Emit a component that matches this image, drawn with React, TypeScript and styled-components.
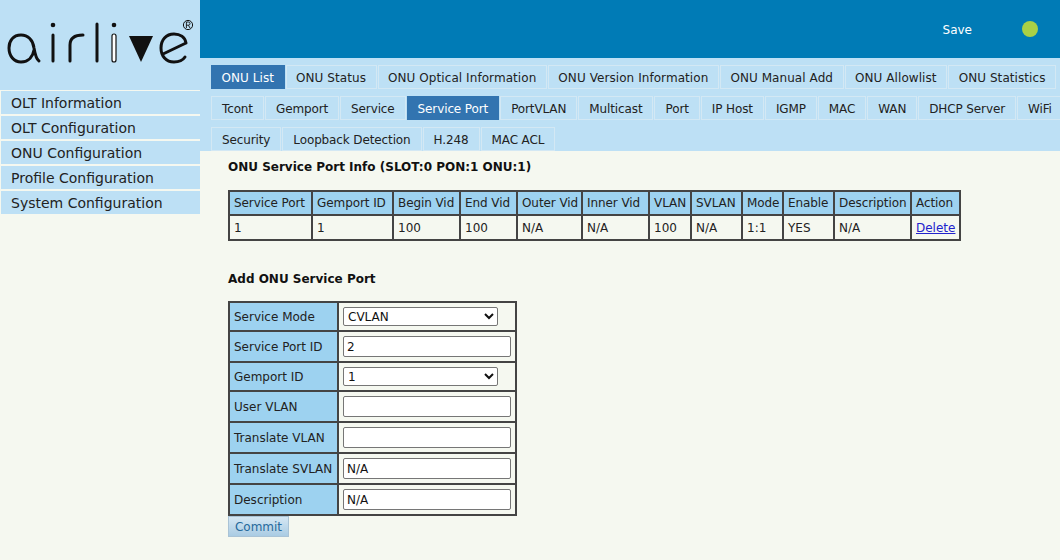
import React from "react";
import styled, { createGlobalStyle } from "styled-components";

const GlobalStyle = createGlobalStyle`
  html, body {
    margin: 0;
    padding: 0;
    height: 100%;
    overflow: hidden;
    background: #f5f8f0;
    font-family: "DejaVu Sans", Verdana, sans-serif;
    font-size: 12px;
    color: #222;
  }
`;

const Page = styled.div`
  display: grid;
  grid-template-columns: 200px 1fr;
  width: 1060px;
  height: 560px;
`;

const Sidebar = styled.aside`
  display: flex;
  flex-direction: column;
`;

const LogoArea = styled.div`
  height: 90px;
  background: #bde0f5;
`;

const MenuList = styled.nav`
  display: flex;
  flex-direction: column;
  background: #bde0f5;
`;

const MenuItem = styled.div`
  height: 23px;
  line-height: 25px;
  padding-left: 10px;
  border-top: 2px solid #f5f8f0;
  border-left: 1px solid #f5f8f0;
  font-size: 14px;
  color: #222;
  &:first-child {
    border-top-width: 1px;
  }
`;

const Main = styled.main`
  display: flex;
  flex-direction: column;
  min-width: 0;
`;

const TopBar = styled.header`
  height: 58px;
  background: #007bb6;
  display: flex;
  align-items: center;
  justify-content: flex-end;
  padding-right: 22px;
  gap: 50px;
`;

const SaveLabel = styled.span`
  color: #fff;
  font-size: 12px;
  margin-top: 2px;
`;

const StatusDot = styled.span`
  width: 16px;
  height: 16px;
  border-radius: 50%;
  background: #a9d046;
`;

const TabsArea = styled.div`
  height: 93px;
  box-sizing: border-box;
  background: #bde0f5;
  padding: 7px 0 0 11px;
  display: flex;
  flex-direction: column;
  gap: 7px;
  overflow: hidden;
`;

const TabRow = styled.div<{ $spacing: number; $pad: number }>`
  display: flex;
  gap: 1px;
  height: 24px;
  flex: none;
  letter-spacing: ${(p) => p.$spacing}px;
  --tab-pad: ${(p) => p.$pad}px;
`;

const Tab = styled.div<{ $active?: boolean }>`
  box-sizing: border-box;
  height: 24px;
  line-height: 24px;
  padding: 0 var(--tab-pad);
  white-space: nowrap;
  font-size: 12px;
  color: ${(p) => (p.$active ? "#fff" : "#222")};
  background: ${(p) => (p.$active ? "#3274b0" : "#bde0f5")};
  border: 1px solid ${(p) => (p.$active ? "#3274b0" : "#d3e8f4")};
`;

const Content = styled.section`
  flex: 1;
  background: #f5f8f0;
  padding: 8px 0 0 28px;
`;

const Heading = styled.h3<{ $gap: number }>`
  margin: 0 0 ${(p) => p.$gap}px;
  font-size: 12px;
  line-height: 16px;
  font-weight: bold;
  color: #111;
`;

const InfoTable = styled.table`
  border-collapse: collapse;
  table-layout: fixed;
  width: 733px;
  border: 2px solid #444;
  margin-bottom: 30px;
`;

const HeadCell = styled.th`
  background: #9dd2f0;
  border: 2px solid #444;
  height: 22px;
  padding: 0 0 0 4px;
  font-weight: normal;
  font-size: 12px;
  letter-spacing: -0.08px;
  text-align: left;
  white-space: nowrap;
  color: #222;
`;

const DataCell = styled.td`
  border: 2px solid #444;
  height: 23px;
  padding: 0 0 0 4px;
  font-size: 12px;
  white-space: nowrap;
  color: #222;
`;

const DeleteLink = styled.a`
  color: #2222cc;
  text-decoration: underline;
`;

const FormTable = styled.table`
  border-collapse: collapse;
  table-layout: fixed;
  width: 289px;
  border: 2px solid #444;
`;

const LabelCell = styled.td`
  width: 103px;
  background: #9dd2f0;
  border: 2px solid #444;
  padding: 0 0 0 4px;
  font-size: 12px;
  white-space: nowrap;
  color: #222;
`;

const FieldCell = styled.td<{ $height: number }>`
  height: ${(p) => p.$height}px;
  border: 2px solid #444;
  padding: 0 0 0 4px;
`;

const TextField = styled.input`
  display: block;
  box-sizing: border-box;
  width: 168px;
  height: 21px;
  padding: 0 3px;
  border: 1px solid #767676;
  border-radius: 2px;
  background: #fff;
  font: 12px "DejaVu Sans", Verdana, sans-serif;
  color: #111;
`;

const SelectField = styled.select`
  display: block;
  box-sizing: border-box;
  width: 155px;
  height: 19px;
  border: 1px solid #767676;
  border-radius: 2px;
  background: #fff;
  font: 12px "DejaVu Sans", Verdana, sans-serif;
  color: #111;
`;

const CommitButton = styled.button`
  display: block;
  box-sizing: border-box;
  width: 61px;
  height: 21px;
  padding: 0;
  border: 1px solid #a9c3d6;
  background: linear-gradient(#d5e7f3, #a9cbe3);
  font: 12px "DejaVu Sans", Verdana, sans-serif;
  color: #26699c;
`;

function Logo() {
  return (
    <svg width="200" height="90" viewBox="0 0 200 90">
      <g fill="none" stroke="#111" strokeWidth="3" strokeLinecap="round">
        <path d="M39 61c-3-2-4-7-5-13-1-8-6-13-13-13-8 0-12 6-12 13 0 8 5 14 12 14 8 0 12-6 13-12" />
        <path d="M53 35v26" />
        <path d="M70 61V45c0-6 4-10 13-10" />
        <path d="M97 24v37" />
        <path d="M186 43c-1-6-6-9-12-9-8 0-13 6-13 14s5 14 13 14c5 0 9-2 11-5M163 54l23-11" />
      </g>
      <circle cx="53" cy="25" r="2.3" fill="#111" />
      <circle cx="114" cy="25" r="2.3" fill="#111" />
      <rect x="112" y="34" width="4" height="28" rx="2" fill="#fff" stroke="#111" strokeWidth="1.2" />
      <path d="M129 36h24l-12 26z" fill="#111" />
      <circle cx="188" cy="25" r="4.6" fill="none" stroke="#111" strokeWidth="1" />
      <path d="M186.4 28v-6h2a1.6 1.6 0 0 1 0 3.2h-2M188.4 25.2l1.6 2.8" fill="none" stroke="#111" strokeWidth="0.9" />
    </svg>
  );
}

const menuItems = [
  "OLT Information",
  "OLT Configuration",
  "ONU Configuration",
  "Profile Configuration",
  "System Configuration",
];

const tabRows: { spacing: number; pad: number; tabs: string[] }[] = [
  {
    spacing: 0.07,
    pad: 9.5,
    tabs: ["ONU List", "ONU Status", "ONU Optical Information", "ONU Version Information", "ONU Manual Add", "ONU Allowlist", "ONU Statistics"],
  },
  {
    spacing: -0.12,
    pad: 10,
    tabs: ["Tcont", "Gemport", "Service", "Service Port", "PortVLAN", "Multicast", "Port", "IP Host", "IGMP", "MAC", "WAN", "DHCP Server", "WiFi"],
  },
  {
    spacing: -0.12,
    pad: 10,
    tabs: ["Security", "Loopback Detection", "H.248", "MAC ACL"],
  },
];

const activeTabs = ["ONU List", "Service Port"];

const columns: [string, string, number][] = [
  ["Service Port", "1", 83],
  ["Gemport ID", "1", 81],
  ["Begin Vid", "100", 67],
  ["End Vid", "100", 57],
  ["Outer Vid", "N/A", 65],
  ["Inner Vid", "N/A", 67],
  ["VLAN", "100", 42],
  ["SVLAN", "N/A", 51],
  ["Mode", "1:1", 41],
  ["Enable", "YES", 51],
  ["Description", "N/A", 77],
  ["Action", "", 49],
];

export default function App() {
  return (
    <Page>
      <GlobalStyle />
      <Sidebar>
        <LogoArea>
          <Logo />
        </LogoArea>
        <MenuList>
          {menuItems.map((item) => (
            <MenuItem key={item}>{item}</MenuItem>
          ))}
        </MenuList>
      </Sidebar>
      <Main>
        <TopBar>
          <SaveLabel>Save</SaveLabel>
          <StatusDot />
        </TopBar>
        <TabsArea>
          {tabRows.map((row) => (
            <TabRow key={row.tabs[0]} $spacing={row.spacing} $pad={row.pad}>
              {row.tabs.map((tab) => (
                <Tab key={tab} $active={activeTabs.includes(tab)}>
                  {tab}
                </Tab>
              ))}
            </TabRow>
          ))}
        </TabsArea>
        <Content>
          <Heading $gap={15}>ONU Service Port Info (SLOT:0 PON:1 ONU:1)</Heading>
          <InfoTable>
            <colgroup>
              {columns.map(([name, , width]) => (
                <col key={name} width={width} />
              ))}
            </colgroup>
            <thead>
              <tr>
                {columns.map(([name]) => (
                  <HeadCell key={name}>{name}</HeadCell>
                ))}
              </tr>
            </thead>
            <tbody>
              <tr>
                {columns.map(([name, value]) => (
                  <DataCell key={name}>
                    {name === "Action" ? <DeleteLink href="#">Delete</DeleteLink> : value}
                  </DataCell>
                ))}
              </tr>
            </tbody>
          </InfoTable>
          <Heading $gap={14}>Add ONU Service Port</Heading>
          <FormTable>
            <tbody>
              <tr>
                <LabelCell>Service Mode</LabelCell>
                <FieldCell $height={27}>
                  <SelectField defaultValue="CVLAN">
                    <option>CVLAN</option>
                  </SelectField>
                </FieldCell>
              </tr>
              <tr>
                <LabelCell>Service Port ID</LabelCell>
                <FieldCell $height={29}>
                  <TextField defaultValue="2" />
                </FieldCell>
              </tr>
              <tr>
                <LabelCell>Gemport ID</LabelCell>
                <FieldCell $height={27}>
                  <SelectField defaultValue="1">
                    <option>1</option>
                  </SelectField>
                </FieldCell>
              </tr>
              <tr>
                <LabelCell>User VLAN</LabelCell>
                <FieldCell $height={29}>
                  <TextField />
                </FieldCell>
              </tr>
              <tr>
                <LabelCell>Translate VLAN</LabelCell>
                <FieldCell $height={29}>
                  <TextField />
                </FieldCell>
              </tr>
              <tr>
                <LabelCell>Translate SVLAN</LabelCell>
                <FieldCell $height={29}>
                  <TextField defaultValue="N/A" />
                </FieldCell>
              </tr>
              <tr>
                <LabelCell>Description</LabelCell>
                <FieldCell $height={29}>
                  <TextField defaultValue="N/A" />
                </FieldCell>
              </tr>
            </tbody>
          </FormTable>
          <CommitButton type="button">Commit</CommitButton>
        </Content>
      </Main>
    </Page>
  );
}
